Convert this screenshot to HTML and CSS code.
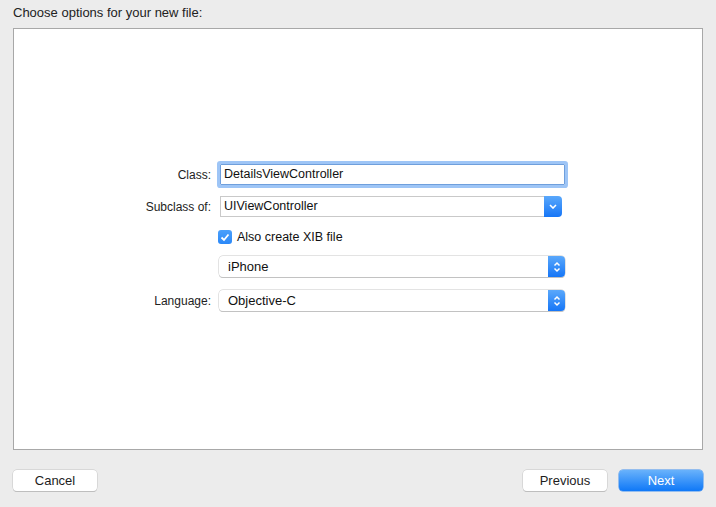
FILE: index.html
```html
<!DOCTYPE html>
<html>
<head>
<meta charset="utf-8">
<link rel="stylesheet" href="styles.css">
</head>
<body>
<div class="title">Choose options for your new file:</div>
<div class="panel">
  <div class="form">
    <div class="row row-class">
      <div class="label">Class:</div>
      <div class="textfield">DetailsViewController</div>
    </div>
    <div class="row row-sub">
      <div class="label">Subclass of:</div>
      <div class="combo">
        <div class="combo-text">UIViewController</div>
        <div class="combo-btn">
          <svg width="8" height="5" viewBox="0 0 8 5"><path d="M1 1 L4 4 L7 1" fill="none" stroke="#fff" stroke-width="1.6"/></svg>
        </div>
      </div>
    </div>
    <div class="row row-check">
      <div class="label"></div>
      <div class="check">
        <span class="box"><svg width="10" height="9" viewBox="0 0 10 9"><path d="M1.5 4.5 L4 7 L8.5 1.5" fill="none" stroke="#fff" stroke-width="1.8"/></svg></span>
        <span class="check-text">Also create XIB file</span>
      </div>
    </div>
    <div class="row row-dev">
      <div class="label"></div>
      <div class="popup">
        <div class="popup-text">iPhone</div>
        <div class="popup-btn">
          <svg width="8" height="12" viewBox="0 0 8 12"><path d="M1.5 4.5 L4 2 L6.5 4.5 M1.5 7.5 L4 10 L6.5 7.5" fill="none" stroke="#fff" stroke-width="1.5"/></svg>
        </div>
      </div>
    </div>
    <div class="row row-lang">
      <div class="label">Language:</div>
      <div class="popup">
        <div class="popup-text">Objective-C</div>
        <div class="popup-btn">
          <svg width="8" height="12" viewBox="0 0 8 12"><path d="M1.5 4.5 L4 2 L6.5 4.5 M1.5 7.5 L4 10 L6.5 7.5" fill="none" stroke="#fff" stroke-width="1.5"/></svg>
        </div>
      </div>
    </div>
  </div>
</div>
<div class="footer">
  <div class="btn">Cancel</div>
  <div class="spacer"></div>
  <div class="btn">Previous</div>
  <div class="btn btn-primary">Next</div>
</div>
</body>
</html>
```

FILE: styles.css
```css
html, body {
  margin: 0;
  padding: 0;
}
body {
  background: #ececec;
  font-family: "Liberation Sans", Arial, sans-serif;
  color: #1d1d1d;
  width: 716px;
  height: 507px;
  overflow: hidden;
}
.title {
  box-sizing: border-box;
  height: 28px;
  padding: 5px 13px 0;
  font-size: 13px;
  line-height: 16px;
  color: #222;
}
.panel {
  box-sizing: border-box;
  margin: 0 13px;
  height: 422px;
  border: 1px solid #a8a8a8;
  background: #fff;
  padding-top: 135px;
}
.form {
  display: flex;
  flex-direction: column;
}
.row {
  display: flex;
  align-items: center;
  height: 21px;
}
.label {
  width: 197px;
  flex: none;
  text-align: right;
  font-size: 12px;
  color: #222;
}
.textfield {
  box-sizing: border-box;
  margin-left: 9px;
  width: 345px;
  height: 21px;
  border: 1px solid #6f9fdc;
  box-shadow: 0 0 0 3px #9ec5f6;
  border-radius: 1px;
  padding-left: 3px;
  font-size: 12.5px;
  line-height: 19px;
  color: #111;
}
.row-sub { margin-top: 11px; }
.combo {
  margin-left: 9px;
  width: 342px;
  height: 21px;
  display: flex;
}
.combo-text {
  box-sizing: border-box;
  flex: 1;
  border: 1px solid #c9c9c9;
  border-right: none;
  padding-left: 3px;
  font-size: 12.5px;
  line-height: 19px;
  color: #111;
}
.combo-btn {
  width: 18px;
  background: linear-gradient(#5aa8fb, #1676f7);
  border-radius: 0 4px 4px 0;
  display: flex;
  align-items: center;
  justify-content: center;
}
.row-check {
  margin-top: 13px;
  height: 14px;
}
.check {
  margin-left: 7px;
  display: flex;
  align-items: center;
}
.box {
  width: 14px;
  height: 14px;
  border-radius: 3px;
  background: linear-gradient(#4ba0fb, #2a88f8);
  display: flex;
  align-items: center;
  justify-content: center;
}
.check-text {
  margin-left: 5px;
  font-size: 12.5px;
  color: #111;
}
.row-dev { margin-top: 12px; }
.row-lang { margin-top: 13px; }
.popup {
  margin-left: 8px;
  width: 346px;
  height: 21px;
  display: flex;
  border-radius: 4px;
  box-shadow: 0 0 0 0.5px #c8c8c8, 0 1px 0 0 #bcbcbc;
  background: #fff;
}
.popup-text {
  flex: 1;
  padding-left: 9px;
  font-size: 13px;
  line-height: 21px;
  color: #111;
}
.popup-btn {
  width: 17px;
  background: linear-gradient(#5aa8fb, #1676f7);
  border-radius: 0 4px 4px 0;
  display: flex;
  align-items: center;
  justify-content: center;
}
.footer {
  display: flex;
  padding: 20px 13px 0;
  gap: 12px;
}
.spacer { flex: 1; }
.btn {
  box-sizing: border-box;
  width: 84px;
  height: 21px;
  border-radius: 4px;
  background: #fff;
  box-shadow: 0 0 0 0.5px #c4c4c4, 0 1px 0 0 #b8b8b8;
  text-align: center;
  font-size: 13px;
  line-height: 21px;
  color: #1d1d1d;
}
.btn-primary {
  background: linear-gradient(#69b2fb, #0f78f7);
  box-shadow: 0 0 0 0.5px #3c8ef0;
  color: #fff;
}
```
